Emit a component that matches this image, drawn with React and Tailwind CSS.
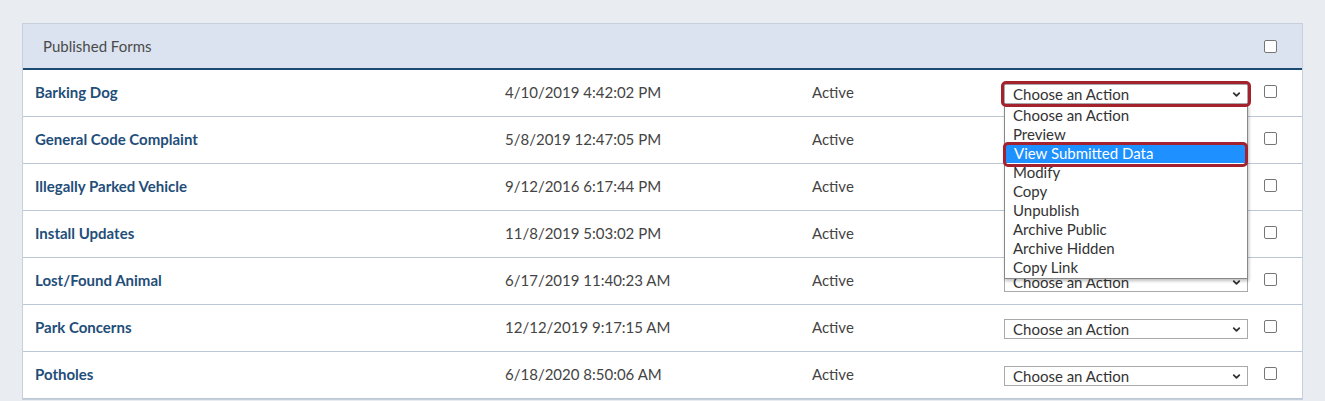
import { ChevronDown } from 'lucide-react';

const forms = [
  { name: 'Barking Dog', date: '4/10/2019 4:42:02 PM', status: 'Active' },
  { name: 'General Code Complaint', date: '5/8/2019 12:47:05 PM', status: 'Active' },
  { name: 'Illegally Parked Vehicle', date: '9/12/2016 6:17:44 PM', status: 'Active' },
  { name: 'Install Updates', date: '11/8/2019 5:03:02 PM', status: 'Active' },
  { name: 'Lost/Found Animal', date: '6/17/2019 11:40:23 AM', status: 'Active' },
  { name: 'Park Concerns', date: '12/12/2019 9:17:15 AM', status: 'Active' },
  { name: 'Potholes', date: '6/18/2020 8:50:06 AM', status: 'Active' },
];

const actions = [
  'Choose an Action',
  'Preview',
  'View Submitted Data',
  'Modify',
  'Copy',
  'Unpublish',
  'Archive Public',
  'Archive Hidden',
  'Copy Link',
];

function Checkbox() {
  return <span className="block w-[13px] h-[13px] rounded-[2px] border border-[#767676] bg-white" />;
}

function ActionSelect({ open }) {
  return (
    <div className="relative w-[244px]">
      {/* highlight ring around the open select */}
      {open && (
        <div className="absolute -inset-[3px] rounded-[5px] border-[3px] border-[#a3222e] pointer-events-none z-20" />
      )}
      <div className="flex h-[20px] items-center justify-between border border-[#a9a9a9] bg-white pl-[8px] pr-[5px] text-[15px] leading-none text-[#333]">
        <span>Choose an Action</span>
        <ChevronDown className="w-[11px] h-[11px] text-[#333]" strokeWidth={4} />
      </div>
      {open && (
        <div className="absolute left-0 top-[20px] z-10 w-[244px] border border-[#888] bg-white py-[1px] shadow-[1px_2px_3px_rgba(0,0,0,0.25)]">
          {actions.map((a, i) => (
            <div key={a} className="relative h-[19px]">
              {i === 2 && (
                <div className="absolute -left-[2px] -right-[1px] -top-[2px] -bottom-[4px] rounded-[5px] border-[3px] border-[#a3222e]" />
              )}
              <div
                className={
                  'flex h-[19px] items-center pl-[8px] text-[15px] leading-none ' +
                  (i === 2 ? 'mx-[1px] bg-[#1e90ff] text-white' : 'text-[#333]')
                }
              >
                {a}
              </div>
            </div>
          ))}
        </div>
      )}
    </div>
  );
}

export default function App() {
  return (
    <div className="min-h-[401px] bg-[#e9edf2] pl-[22px] pr-[22px] pt-[23px]" style={{ fontFamily: 'Lato, "Noto Sans", sans-serif' }}>
      <div className="border border-[#c6d0dc] bg-white">
        {/* Header */}
        <div className="flex h-[46px] items-center justify-between border-b-2 border-[#1c4a73] bg-[#dae3ef] pl-[20px] pr-[25px]">
          <span className="text-[15px] text-[#4a4a4a]">Published Forms</span>
          <Checkbox />
        </div>

        {/* Rows */}
        {forms.map((f, i) => (
          <div key={f.name} className="flex h-[47px] items-center border-b border-[#bcc7d5] pl-[12px] pb-[1px]">
            <div className="w-[470px] text-[15px] font-bold text-[#1f4e79]">{f.name}</div>
            <div className="w-[307px] text-[15px] text-[#444]">{f.date}</div>
            <div className="w-[192px] text-[15px] text-[#444]">{f.status}</div>
            <div className="flex w-[260px] self-start pt-[14px]">
              <ActionSelect open={i === 0} />
            </div>
            <div className="self-start pt-[15px]">
              <Checkbox />
            </div>
          </div>
        ))}
      </div>
    </div>
  );
}
